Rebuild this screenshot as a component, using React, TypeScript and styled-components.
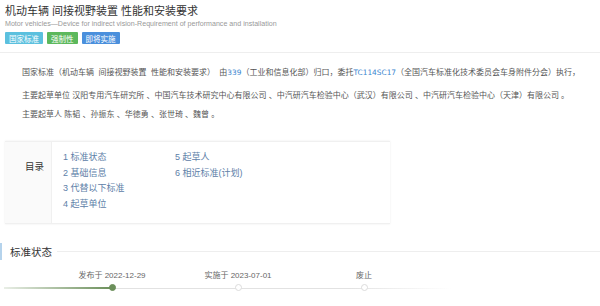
import React from "react";
import styled, { createGlobalStyle } from "styled-components";

const GlobalStyle = createGlobalStyle`
  html, body {
    margin: 0;
    padding: 0;
    background: #ffffff;
  }
  body {
    font-family: "Liberation Sans", "Noto Sans CJK SC", sans-serif;
    color: #333;
  }
`;

const Page = styled.div`
  width: 600px;
  height: 306px;
  overflow: hidden;
  background: #fff;
`;

const Header = styled.header`
  padding: 4px 5px 8px;
  border-bottom: 1px solid #eeeeee;
`;

const Title = styled.h1`
  margin: 0;
  font-size: 11px;
  line-height: 14px;
  font-weight: normal;
  color: #333;
`;

const Subtitle = styled.div`
  margin-top: 1px;
  font-size: 7.1px;
  line-height: 10px;
  color: #999;
`;

const Badges = styled.div`
  display: flex;
  gap: 4px;
  margin-top: 3px;
`;

const Badge = styled.span<{ color: string }>`
  display: inline-flex;
  align-items: center;
  height: 12px;
  padding: 0 4px;
  font-size: 7.5px;
  color: #fff;
  background: ${(p) => p.color};
  border-radius: 1px;
`;

const Intro = styled.section`
  padding: 10px 0 0 22px;
`;

const Para = styled.p<{ gap?: number }>`
  margin: 0 0 ${(p) => p.gap ?? 0}px;
  font-size: 8px;
  line-height: 19px;
  color: #555;
  white-space: nowrap;
`;

const Link = styled.span`
  color: #3a86d0;
  font-family: "DejaVu Sans", "Liberation Sans", sans-serif;
  font-size: 7.4px;
`;

const Toc = styled.nav`
  display: flex;
  width: 385px;
  height: 83px;
  margin: 17px 0 0 5px;
  box-shadow: 0 0 2px rgba(0, 0, 0, 0.08);
  border-top: 1px solid #f0f0f0;
  border-bottom: 1px solid #f0f0f0;
  box-sizing: border-box;
`;

const TocLabel = styled.div`
  width: 47px;
  padding: 18px 0 0 20px;
  box-sizing: border-box;
  background: #fafafa;
  border-right: 1px solid #f0f0f0;
  font-size: 9.5px;
  line-height: 14px;
  color: #333;
`;

const TocList = styled.ol`
  display: grid;
  grid-template-columns: 112px 112px;
  grid-template-rows: repeat(4, 15.5px);
  grid-auto-flow: column;
  margin: 0;
  padding: 8px 0 0 11px;
  list-style: none;
`;

const TocItem = styled.li`
  font-size: 9px;
  line-height: 15.5px;
  color: #5d80a8;
  white-space: nowrap;
`;

const SectionHead = styled.div`
  display: flex;
  align-items: center;
  margin-top: 19px;
  height: 17px;
  border-left: 2px solid #b5d3ec;
  padding-left: 8px;
  gap: 5px;
`;

const SectionTitle = styled.h2`
  margin: 0;
  font-size: 10.5px;
  font-weight: normal;
  color: #333;
  white-space: nowrap;
`;

const SectionRule = styled.div`
  flex: 1;
  height: 1px;
  margin-top: -1px;
  background: #eeeeee;
`;

const Timeline = styled.div`
  position: relative;
  display: flex;
  padding: 11px 0 0 49px;

  &::before {
    content: "";
    position: absolute;
    left: 4px;
    top: 27px;
    width: 108px;
    height: 1.5px;
    background: linear-gradient(to right, rgba(107, 143, 90, 0.15), #6b8f5a);
  }

  &::after {
    content: "";
    position: absolute;
    left: 112px;
    top: 27.5px;
    width: 340px;
    height: 1px;
    background: linear-gradient(to right, #e2e2e2 70%, rgba(226, 226, 226, 0));
  }
`;

const Step = styled.div`
  width: 126px;
  display: flex;
  flex-direction: column;
  align-items: center;
`;

const StepLabel = styled.span`
  font-size: 8px;
  line-height: 10px;
  color: #666;
  white-space: nowrap;
`;

const Dot = styled.span<{ active?: boolean }>`
  position: relative;
  z-index: 1;
  margin-top: 3px;
  width: 7px;
  height: 7px;
  box-sizing: border-box;
  border-radius: 50%;
  background: ${(p) => (p.active ? "#6b8f5a" : "#fff")};
  border: 1px solid ${(p) => (p.active ? "#6b8f5a" : "#dcdcdc")};
`;

const badges = [
  { text: "国家标准", color: "#5bc0de" },
  { text: "强制性", color: "#5cb85c" },
  { text: "即将实施", color: "#4a8fdc" },
];

const tocItems = [
  "1 标准状态",
  "2 基础信息",
  "3 代替以下标准",
  "4 起草单位",
  "5 起草人",
  "6 相近标准(计划)",
];

const steps = [
  { label: "发布于 2022-12-29", active: true },
  { label: "实施于 2023-07-01", active: false },
  { label: "废止", active: false },
];

export default function App() {
  return (
    <Page>
      <GlobalStyle />
      <Header>
        <Title>机动车辆 间接视野装置 性能和安装要求</Title>
        <Subtitle>
          Motor vehicles—Device for indirect vision-Requirement of performance and installation
        </Subtitle>
        <Badges>
          {badges.map((b) => (
            <Badge key={b.text} color={b.color}>
              {b.text}
            </Badge>
          ))}
        </Badges>
      </Header>

      <Intro>
        <Para gap={4}>
          国家标准（机动车辆&nbsp; 间接视野装置&nbsp; 性能和安装要求）&nbsp;&nbsp;由<Link>339</Link>（工业和信息化部）归口，委托
          <Link>TC114SC17</Link>（全国汽车标准化技术委员会车身附件分会）执行，
        </Para>
        <Para>
          主要起草单位 汉阳专用汽车研究所 、中国汽车技术研究中心有限公司 、中汽研汽车检验中心（武汉）有限公司 、中汽研汽车检验中心（天津）有限公司 。
        </Para>
        <Para>主要起草人 陈韬 、孙振东 、华徳勇 、张世琦 、魏曾 。</Para>
      </Intro>

      <Toc>
        <TocLabel>目录</TocLabel>
        <TocList>
          {tocItems.map((t) => (
            <TocItem key={t}>{t}</TocItem>
          ))}
        </TocList>
      </Toc>

      <SectionHead>
        <SectionTitle>标准状态</SectionTitle>
        <SectionRule />
      </SectionHead>

      <Timeline>
        {steps.map((s) => (
          <Step key={s.label}>
            <StepLabel>{s.label}</StepLabel>
            <Dot active={s.active} />
          </Step>
        ))}
      </Timeline>
    </Page>
  );
}
